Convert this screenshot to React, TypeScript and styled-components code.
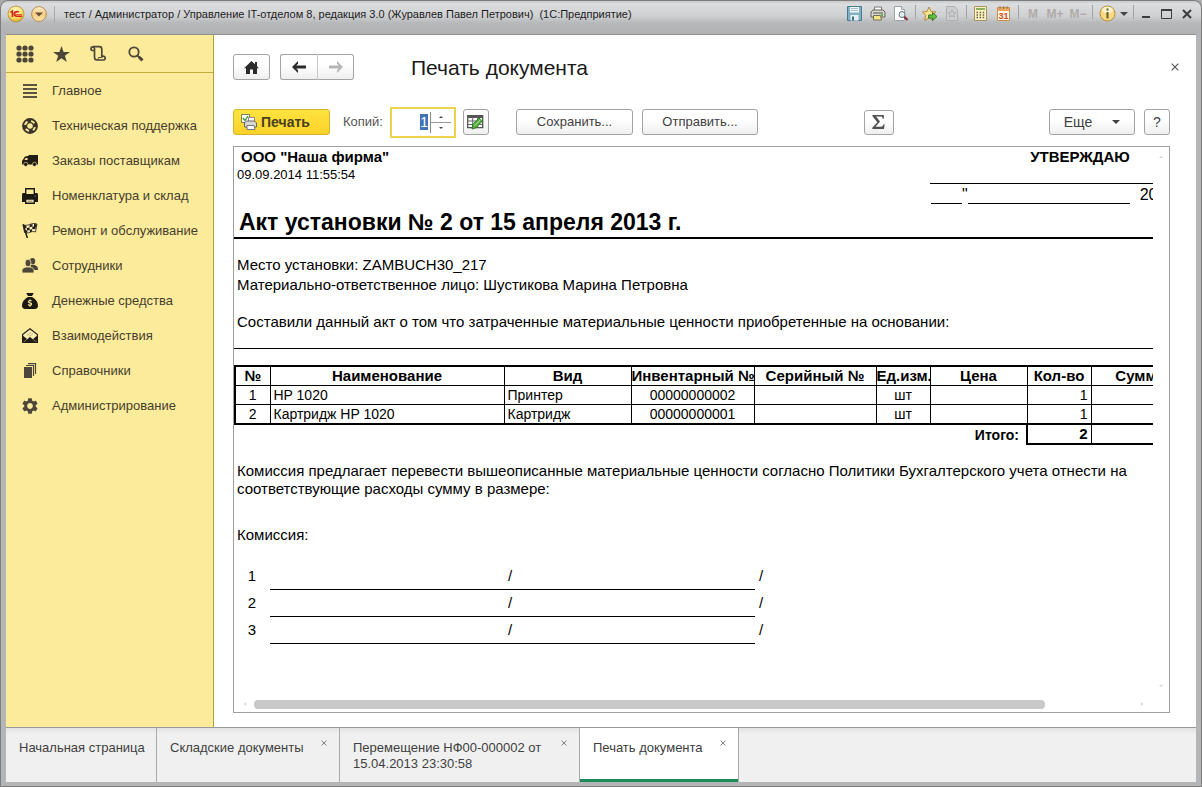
import React, { useEffect, useRef, useState } from "react";
import styled, { createGlobalStyle } from "styled-components";
import { FaSackDollar } from "react-icons/fa6";
import { MdSettings } from "react-icons/md";

const GlobalStyle = createGlobalStyle`
  *, *::before, *::after { box-sizing: border-box; }
  body {
    margin: 0;
    background: #ababab;
    color: #404040;
    font: 13px/16px "Liberation Sans", Arial, sans-serif;
  }
  button, input { font: inherit; color: inherit; }
  svg { display: block; flex: none; }
`;

/* ---------- window frame ---------- */

const Window = styled.div`
  display: flex;
  flex-direction: column;
  min-height: 100vh;
  padding: 0 5px 4px;
  background: #b4b5b6;
  border: 1px solid #7d7d7d;
  border-radius: 8px 8px 0 0;
`;

const TitleBar = styled.header`
  display: flex;
  align-items: center;
  height: 33px;
  margin: 0 -5px;
  padding: 0 3px 8px 6px;
  border-radius: 8px 8px 0 0;
  background: linear-gradient(#c9cacc 0, #dcdddf 3px, #cfd0d2 15px, #b7b8ba 22px, #b0b1b3 100%);
  color: #1c1c1c;
  font-size: 11px;
`;

const WindowTitle = styled.span`
  flex: 1;
  min-width: 0;
  margin-left: 1px;
  padding-left: 9px;
  border-left: 1px solid #a9a9ab;
  white-space: nowrap;
  overflow: hidden;
`;

const BarButton = styled.button<{ $w?: number }>`
  display: flex;
  align-items: center;
  justify-content: center;
  width: ${(p) => p.$w ?? 24}px;
  height: 18px;
  padding: 0;
  border: 0;
  background: none;
  color: #b0aba9;
  font-size: 12px;
  font-weight: bold;
`;

const BarSeparator = styled.span<{ $tight?: boolean }>`
  width: 1px;
  height: 14px;
  margin: ${(p) => (p.$tight ? "0 2px 4px" : "0 4px 4px 3px")};
  background: #a2a2a4;
`;

const Workspace = styled.div`
  display: flex;
  flex: 1;
  border-top: 1px solid #8f8f8f;
  background: #fff;
`;

/* ---------- sidebar ---------- */

const Sidebar = styled.aside`
  flex: none;
  width: 208px;
  background: #fdeb9c;
  border-right: 1px solid #b1a137;
`;

const QuickBar = styled.div`
  display: flex;
  height: 38px;
  padding: 0 6px;
  border-bottom: 1px solid #c2ac42;
`;

const QuickButton = styled.button`
  display: flex;
  align-items: center;
  justify-content: center;
  width: 37px;
  padding: 0 12px 0 0;
  border: 0;
  background: none;
  color: #4c4638;
`;

const Sections = styled.nav`
  display: flex;
  flex-direction: column;
`;

const SectionLink = styled.a`
  display: flex;
  align-items: center;
  gap: 14px;
  height: 35px;
  padding-left: 16px;
  color: #453e2c;
  font-size: 13px;
  text-decoration: none;
  white-space: nowrap;
`;

/* ---------- main area ---------- */

const Main = styled.main`
  display: flex;
  flex: 1;
  flex-direction: column;
  min-width: 0;
  padding: 19px 26px 14px 19px;
`;

const PageHead = styled.div`
  display: flex;
  align-items: center;
  height: 26px;
`;

const PageTitle = styled.h1`
  flex: 1;
  margin: 2px 0 0 57px;
  color: #1a1a1a;
  font-size: 21px;
  font-weight: normal;
  line-height: 24px;
`;

const CloseButton = styled.button`
  padding: 0;
  margin-right: -9px;
  border: 0;
  background: none;
`;

const Button = styled.button<{ $w: number; $h?: number; $primary?: boolean; $large?: boolean }>`
  display: flex;
  flex: none;
  align-items: center;
  justify-content: center;
  gap: 4px;
  width: ${(p) => p.$w}px;
  height: ${(p) => p.$h ?? 26}px;
  padding: 0 ${(p) => (p.$primary ? 12 : 0)}px 0 0;
  border: 1px solid ${(p) => (p.$primary ? "#d9b32c" : "#a3a3a3")};
  border-radius: 3px;
  background: ${(p) =>
    p.$primary ? "linear-gradient(#ffe33f, #fad22a)" : "linear-gradient(#fff 40%, #efefef)"};
  color: ${(p) => (p.$primary ? "#4a4020" : "#404040")};
  font-size: ${(p) => (p.$primary || p.$large ? 14 : 13)}px;
  font-weight: ${(p) => (p.$primary ? "bold" : "normal")};
`;

const HistoryButtons = styled.div`
  display: flex;
  margin-left: 10px;

  ${Button}:first-child { border-radius: 3px 0 0 3px; border-right-color: #c8c8c8; }
  ${Button}:last-child { border-radius: 0 3px 3px 0; border-left: 0; }
`;

const Toolbar = styled.div`
  display: flex;
  align-items: center;
  height: 32px;
  margin: 26px 0 8px;
`;

const CopiesLabel = styled.label`
  margin: 0 7px 0 13px;
  color: #555;
`;

const Spinner = styled.div`
  display: flex;
  width: 66px;
  height: 31px;
  padding: 3px;
  margin-right: 7px;
  border: 2px solid #edd44f;
  background: #fff;
`;

const CopiesInput = styled.input`
  flex: 1;
  min-width: 0;
  padding: 0 2px;
  border: 0;
  outline: 0;
  background: none;
  text-align: right;
  font-size: 14px;
  &::selection { background: #3f74b8; color: #fff; }
`;

const SpinnerKeys = styled.div`
  display: flex;
  flex-direction: column;
  width: 21px;
  border-left: 1px solid #8a8a8a;
`;

const SpinnerKey = styled.button`
  display: flex;
  flex: 1;
  align-items: center;
  justify-content: center;
  padding: 0;
  border: 0;
  background: none;
  & + & { border-top: 1px solid #9a9a9a; }
`;

const ToolGroup = styled.div<{ $before?: number }>`
  display: flex;
  align-items: center;
  gap: 9px;
  margin-left: ${(p) => (p.$before === undefined ? "auto" : `${p.$before}px`)};
`;

/* ---------- printed sheet ---------- */

const Viewer = styled.section`
  display: grid;
  flex: 1;
  grid-template: minmax(0, 1fr) 16px / minmax(0, 1fr) 16px;
  border: 1px solid #a0a0a0;
  background: #fff;
`;

const Sheet = styled.article`
  overflow: hidden;
  color: #000;
  font-size: 15px;
  line-height: 20px;
`;

const SheetHead = styled.div`
  display: flex;
  padding-left: 3px;
`;

const Issuer = styled.div`
  flex: none;
  width: 693px;
`;

const Company = styled.div`
  padding-left: 4px;
  font-weight: bold;
`;

const Stamp = styled.div`
  font-size: 13px;
  line-height: 16px;
`;

const Approval = styled.div`
  flex: none;
  width: 300px;
`;

const ApprovalTitle = styled.div`
  height: 37px;
  border-bottom: 1px solid #000;
  font-weight: bold;
  text-align: center;
`;

const ApprovalDate = styled.div`
  display: flex;
  height: 20px;
  padding-left: 1px;
  font-size: 16px;
  line-height: 22px;
`;

const Blank = styled.span<{ $w: number }>`
  width: ${(p) => p.$w}px;
  border-bottom: 1px solid #000;
`;

const Year = styled.span`
  margin-left: 10px;
`;

const SheetTitle = styled.h2`
  margin: 0;
  padding: 3px 0 0 5px;
  border-bottom: 2px solid #000;
  font-size: 23px;
  line-height: 30px;
  white-space: nowrap;
`;

const Text = styled.p<{ $top: number; $tight?: boolean }>`
  margin: ${(p) => p.$top}px 0 0;
  padding-left: 3px;
  line-height: ${(p) => (p.$tight ? 18 : 20)}px;
`;

const BasisLine = styled.div`
  height: 17px;
  border-bottom: 1px solid #000;
`;

const Items = styled.table`
  width: 954px;
  margin-top: 16px;
  border-collapse: collapse;
  table-layout: fixed;
  font-size: 14px;
  line-height: 18px;

  th, td { height: 19px; padding: 0 3px; white-space: nowrap; }
  thead th, tbody td { border: 1px solid #000; }
  thead th { padding: 0; border-top-width: 2px; font-size: 15px; }
  thead th:first-child, tbody td:first-child { border-left-width: 2px; }
  tbody tr:last-child td { border-bottom-width: 2px; }
  tfoot th { padding-right: 7px; text-align: right; }
`;

const Cell = styled.td<{ $align?: string }>`
  text-align: ${(p) => p.$align ?? "left"};
`;

const TotalCell = styled.td<{ $first?: boolean }>`
  border: 1px solid #000;
  border-bottom-width: 2px;
  border-left-width: ${(p) => (p.$first ? 2 : 1)}px;
  font-size: 15px;
  font-weight: bold;
  text-align: right;
`;

const Signatures = styled.ol`
  margin: 18px 0 0;
  padding: 0;
  list-style: none;
`;

const Signature = styled.li`
  display: flex;
  height: 27px;
  line-height: 26px;
`;

const SignatureNo = styled.span`
  width: 36px;
  text-align: center;
`;

const SignatureLine = styled.span`
  display: flex;
  width: 485px;
  margin-right: 4px;
  padding-left: 238px;
  border-bottom: 1px solid #000;
`;

const VerticalScroll = styled.div`
  display: flex;
  flex-direction: column;
  align-items: center;
  justify-content: space-between;
  padding: 8px 0;
`;

const HorizontalScroll = styled.div`
  display: flex;
  align-items: center;
  padding: 0 9px;
`;

const ScrollTrack = styled.div`
  flex: 1;
  margin: 0 7px;
`;

const ScrollThumb = styled.div`
  width: 90%;
  height: 9px;
  border-radius: 4px;
  background: #c9c9c9;
`;

/* ---------- open windows ---------- */

const Tabs = styled.div`
  display: flex;
  height: 55px;
  border-top: 1px solid #999;
  background: linear-gradient(#e2e2e2, #f0f0f0 6px);
`;

const Tab = styled.div<{ $w: number; $active?: boolean }>`
  display: flex;
  align-items: flex-start;
  justify-content: space-between;
  width: ${(p) => p.$w}px;
  padding: 12px 12px 0 13px;
  border-right: 1px solid #a9a9a9;
  ${(p) => p.$active && "background: #fff; box-shadow: inset 0 -3px #1f8a55;"}
`;

const TabLabel = styled.button<{ $wrap?: boolean }>`
  padding: 0;
  border: 0;
  background: none;
  line-height: 16px;
  text-align: left;
  white-space: ${(p) => (p.$wrap ? "normal" : "nowrap")};
`;

const TabClose = styled.button`
  flex: none;
  padding: 0;
  border: 0;
  background: none;
`;

/* ---------- drawings ---------- */

const Cross = ({ size, color = "#555" }: { size: number; color?: string }) => (
  <svg width={size} height={size} viewBox="0 0 8 8" stroke={color} strokeWidth="1.2">
    <path d="M.7.7l6.6 6.6M7.3.7L.7 7.3" />
  </svg>
);

const Triangle = ({ w, color, turn = 0 }: { w: number; color: string; turn?: number }) => (
  <svg width={w} height={w} viewBox="0 0 8 8">
    <path d="M0 2h8L4 6z" fill={color} transform={`rotate(${turn} 4 4)`} />
  </svg>
);

const Arrow = ({ color, flip }: { color: string; flip?: boolean }) => (
  <svg width="14" height="12" viewBox="0 0 14 12">
    <path
      d="M6 0L0 6l6 6V9.2L4.300 7.400H14V4.600H4.300L6 2.800z"
      fill={color}
      transform={flip ? "translate(14 0) scale(-1 1)" : undefined}
    />
  </svg>
);

const LogoIcon = () => (
  <svg width="18" height="18" viewBox="0 0 18 18">
    <defs>
      <radialGradient id="logo" cx=".45" cy=".3" r=".8">
        <stop offset="0" stopColor="#fffbd0" />
        <stop offset=".55" stopColor="#fbdf63" />
        <stop offset="1" stopColor="#c98a1c" />
      </radialGradient>
    </defs>
    <circle cx="9" cy="9" r="8" fill="url(#logo)" stroke="#b48a45" strokeWidth=".8" />
    <g fill="none" stroke="#d3261b" strokeWidth="1.6">
      <path d="M3.4 7.3L5.4 6v6" />
      <path d="M11.8 7.2A2.8 2.4 0 1 0 9.4 11.3H15" />
      <path d="M10.6 8.3A1.3 1 0 1 0 9.4 9.6H15" strokeWidth=".8" />
    </g>
  </svg>
);

const MenuOrbIcon = () => (
  <svg width="18" height="18" viewBox="0 0 18 18">
    <defs>
      <linearGradient id="orb" x2="0" y2="1">
        <stop offset="0" stopColor="#fff0cf" />
        <stop offset=".5" stopColor="#f6cb85" />
        <stop offset="1" stopColor="#ffe7a8" />
      </linearGradient>
    </defs>
    <circle cx="9" cy="9" r="7.4" fill="url(#orb)" stroke="#b58c55" />
    <path d="M5 7.500h8l-4 4z" fill="#6a5238" />
  </svg>
);

const DisketteIcon = () => (
  <svg width="15" height="15" viewBox="0 0 15 15">
    <path d="M.5.5h14v14H.5z" fill="#7fb0c3" stroke="#47798f" />
    <path d="M3 1h9v5.500H3z" fill="#f4f8fa" />
    <path d="M4 2.500h7M4 4.500h7" stroke="#a7bcc5" />
    <path d="M3.500 9h8v5.500h-8z" fill="#e8f0f3" />
    <path d="M5 10.500h2v4H5z" fill="#40707f" />
  </svg>
);

const PrinterColorIcon = () => (
  <svg width="16" height="15" viewBox="0 0 16 15">
    <path d="M4.500 5V1h7v4" fill="#fff" stroke="#777" />
    <path d="M1 6l2-2h10l2 2v5H1z" fill="#d9d6cd" stroke="#656258" />
    <path d="M3 7h10" stroke="#555" />
    <path d="M11 9h2" stroke="#45a23c" strokeWidth="1.500" />
    <path d="M3.500 9.500h7l1 4.500h-8z" fill="#f4e680" stroke="#77705a" />
  </svg>
);

const PreviewIcon = () => (
  <svg width="16" height="15" viewBox="0 0 16 15">
    <path d="M1.500.5h7l3 3v11h-10z" fill="#fff" stroke="#9aa3aa" />
    <path d="M8.500.5v3h3" fill="#dfe5e8" stroke="#9aa3aa" />
    <circle cx="9" cy="8.500" r="3" fill="#e3f2f7" stroke="#60747d" />
    <path d="M11.300 10.800l3.200 3.200" stroke="#8f2138" strokeWidth="2" />
  </svg>
);

const FavoriteAddIcon = () => (
  <svg width="16" height="16" viewBox="0 0 16 16">
    <path d="M7 1l2 4.500 5 .5-3.700 3.300 1 5L7 12l-4.300 2.300 1-5L.5 6 5 5.500z" fill="#fbe48e" stroke="#b78a3b" />
    <path d="M6.500 9h4V6.500L15 10.500l-4.500 4V12h-4z" fill="#62c044" stroke="#2e7c28" />
  </svg>
);

const FavoritesIcon = () => (
  <svg width="14" height="15" viewBox="0 0 14 15" fill="none" stroke="#b0b0b0">
    <path d="M1.500.5h8l3 3v11h-11z" fill="#cccdce" />
    <path d="M7 4l1.200 2.400 2.600.3-2 1.700.6 2.600L7 9.700 4.600 11l.6-2.600-2-1.700 2.600-.3z" />
  </svg>
);

const CalculatorIcon = () => (
  <svg width="13" height="15" viewBox="0 0 13 15">
    <path d="M.5.5h12v14H.5z" fill="#fbf1c5" stroke="#a99360" />
    <path d="M2 2h9v2H2z" fill="#8bb35c" />
    <path d="M2.500 6.500h8M2.500 9h8M2.500 11.500h8" stroke="#6c5f38" strokeWidth="1.500" strokeDasharray="1.500 1.600" />
  </svg>
);

const CalendarIcon = () => (
  <svg width="13" height="15" viewBox="0 0 13 15">
    <path d="M.5 1.500h12v13H.5z" fill="#fff8e6" stroke="#c59052" />
    <path d="M1 2h11v3H1z" fill="#efa65a" />
    <path d="M3 0v3M6.500 0v3M10 0v3" stroke="#9b7b58" />
    <text x="6.500" y="13" textAnchor="middle" fontSize="9" fontWeight="bold" fill="#d4451f">31</text>
  </svg>
);

const InfoIcon = () => (
  <svg width="17" height="17" viewBox="0 0 17 17">
    <circle cx="8.500" cy="8.500" r="7.500" fill="#fbd983" stroke="#b98a3c" />
    <ellipse cx="8.500" cy="5" rx="5.500" ry="3.200" fill="#fff3cf" />
    <path d="M8.500 3.500v2M8.500 7v6.500" stroke="#5b5f2c" strokeWidth="2" />
  </svg>
);

const GridDotsIcon = () => (
  <svg width="18" height="18" viewBox="0 0 18 18" fill="currentColor">
    {[3, 9, 15].map((y) => [3, 9, 15].map((x) => <circle key={`${x}${y}`} cx={x} cy={y} r="2.600" />))}
  </svg>
);

const StarIcon = () => (
  <svg width="17" height="16" viewBox="0 0 17 16" fill="currentColor">
    <path d="M8.500 0l2.100 5.900H17l-5.100 3.900L13.800 16l-5.300-3.700L3.200 16l1.900-6.200L0 5.900h6.400z" />
  </svg>
);

const HistoryIcon = () => (
  <svg width="17" height="17" viewBox="0 0 17 17" fill="none" stroke="currentColor" strokeWidth="1.700">
    <path d="M4.500 5.500H2.300A1.800 1.800 0 1 1 4.500 3.500V12c0 2.300 1 3 2.500 3h6.500a1.900 1.900 0 1 0-1.700-3" />
    <path d="M3 1.700h6.500c1.600 0 2.300.8 2.300 2.500v8.300" />
    <path d="M7 15c1.200 0 1.500-1 1.500-2.500h3" strokeWidth="1" />
  </svg>
);

const SearchIcon = () => (
  <svg width="16" height="16" viewBox="0 0 16 16" fill="none" stroke="currentColor">
    <circle cx="6" cy="6" r="4.700" strokeWidth="1.800" />
    <path d="M9.500 9.500l2 2" strokeWidth="1.800" />
    <path d="M11 11l3.500 3.300" strokeWidth="3" />
  </svg>
);

const LinesIcon = () => (
  <svg width="16" height="16" viewBox="0 0 16 16" stroke="#5b5240" strokeWidth="2">
    <path d="M1 2h14M1 6h14M1 10h14M1 14h14" />
  </svg>
);

const LifebuoyIcon = () => (
  <svg width="16" height="16" viewBox="0 0 16 16" fill="none">
    <circle cx="8" cy="8" r="7" stroke="#3a3428" strokeWidth="1.800" />
    <circle cx="8" cy="8" r="3.400" stroke="#3a3428" strokeWidth="1.200" />
    <path
      d="M4.300 1.800l2 3.200 2.500-.6L9.500.8zM14 4l-3 2.300.7 2.700 3.600.5zM12.300 14l-2.300-3-2.800.6-.5 3.700zM2 12.300L5 10l-.6-2.800L.8 6.500z"
      fill="#3a3428"
    />
  </svg>
);

const TruckIcon = () => (
  <svg width="16" height="12" viewBox="0 0 16 12" fill="#211d15">
    <path d="M6 1l1-1h9v9.500H0V6l3-4.500z" />
    <path d="M3.700 3H5.500v2H2.400z" fill="#fdeb9c" />
    <circle cx="3.700" cy="9.300" r="2.100" stroke="#fdeb9c" strokeWidth=".6" />
    <circle cx="12.500" cy="9.300" r="2.100" stroke="#fdeb9c" strokeWidth=".6" />
  </svg>
);

const PrinterIcon = () => (
  <svg width="16" height="16" viewBox="0 0 16 16">
    <path d="M0 6.500C0 5.700.6 5 1.500 5h13c.9 0 1.500.7 1.500 1.500V14H0z" fill="#1c1912" />
    <path d="M3.700 6V.8h8.600V6" fill="#fdeb9c" stroke="#1c1912" strokeWidth="1.400" />
    <path d="M3.700 11h8.600v4.300H3.700z" fill="#fdf3c4" stroke="#1c1912" strokeWidth="1.400" />
    <path d="M5.500 13.200h5M12.500 8h1.500" stroke="#8b8058" />
  </svg>
);

const FlagIcon = () => (
  <svg width="16" height="16" viewBox="0 0 16 16">
    <path d="M1 1.500c2 1.300 4 1 6.500 0S12.500 0 15 1l-1.500 8c-2-.8-3.500-.5-5.500.3s-3.500 1-5.500.2z" fill="#fdf3c4" stroke="#211d15" strokeWidth=".8" />
    <path
      d="M1.200 2l3 .8.500 2.400-2.900-.6zM7.500 1.800L10.500 1l-.1 2.500-2.800.8zM4.700 5.200l2.900-.9.100 2.600-2.500.5zM10.400 3.500l3.600.1-.6 2.600-3.200-.2zM2.200 7l3 .4.300 2.200-2.800-.4zM7.700 6.900l2.500-.9-.2 2.500-2.100.8zM12 1l2.800.3-.6 2.300-2.200-.1z"
      fill="#211d15"
    />
    <path d="M1.300 1.500L5.300 15" stroke="#211d15" strokeWidth="1.500" />
  </svg>
);

const PeopleIcon = () => (
  <svg width="16" height="15" viewBox="0 0 16 15" fill="#4d463a">
    <ellipse cx="10.500" cy="3.300" rx="2.700" ry="3.300" />
    <path d="M8.500 7h4.300c2 .8 3.200 1.800 3.200 3.800V12H9z" />
    <g stroke="#fdeb9c" strokeWidth=".8">
      <ellipse cx="6" cy="5" rx="3" ry="3.800" />
      <path d="M0 15v-2.500c0-2 1.500-2.600 4-3.500h4c2.500.9 4 1.500 4 3.500V15z" />
    </g>
  </svg>
);

const LetterIcon = () => (
  <svg width="16" height="15" viewBox="0 0 16 15">
    <path d="M.6 6.500L8 .8l7.400 5.700v8H.6z" fill="#fbeeb2" stroke="#211d15" strokeWidth="1.100" />
    <path d="M0 7l5 4-5 4zM16 7l-5 4 5 4zM.5 15L8 9l7.500 6z" fill="#211d15" />
    <path d="M5 7.500l4-3M7 8.500l4-3" stroke="#c9b97b" />
  </svg>
);

const BooksIcon = () => (
  <svg width="16" height="15" viewBox="0 0 16 15">
    <path d="M2 4h8v11H2z" fill="#4d463a" />
    <path d="M4 2.500h7.500V13M6 .7h7.500V11" fill="none" stroke="#4d463a" strokeWidth="1.200" />
  </svg>
);

const HomeIcon = () => (
  <svg width="15" height="13" viewBox="0 0 15 13" fill="#2b2b2b">
    <path d="M7.500 0L11 3.300V1h2v4.200L15 7.200h-2V13H9V8.500H6V13H2V7.200H0z" />
  </svg>
);

const PrintFormIcon = () => (
  <svg width="16" height="16" viewBox="0 0 16 16">
    <path d="M.5.5h8v8h-8z" fill="#fff" stroke="#77805a" />
    <path d="M2 4l2 2.500L7 2" fill="none" stroke="#3d8f34" strokeWidth="1.300" />
    <path d="M7.500 7V3.500h6V7" fill="#fff" stroke="#8b8b8b" />
    <path d="M3.500 9l2-2h8l2 2v4h-12z" fill="#d8d8d2" stroke="#666" />
    <path d="M6 11.500h7l1 4H6z" fill="#fff" stroke="#777" />
  </svg>
);

const EditTableIcon = () => (
  <svg width="17" height="16" viewBox="0 0 17 16">
    <path d="M.7 1.700h15v12H.7z" fill="#fff" stroke="#555" strokeWidth="1.300" />
    <path d="M1 3h14.500" stroke="#555" strokeWidth="2" />
    <path d="M1 7h14.500M1 10.500h14.500M5.700 3v11M10.700 3v11" stroke="#666" />
    <path d="M5 15l.8-4.500L12 4l3.300 3L9 13.800z" fill="#55b03d" stroke="#2f7d25" />
    <path d="M7.500 12l6-6.300" stroke="#b6e3a6" />
  </svg>
);

const SigmaIcon = () => (
  <svg width="13" height="14" viewBox="0 0 13 14" fill="#505050">
    <path d="M.5 0h11.300v3.700h-1C10.500 2.200 10 1.600 8.500 1.600H4L8 6.500l-4.500 5.200H9c1.600 0 2.200-.8 2.600-2.400h1L12 14H.3v-1.200l5-5.600L.5 1.300z" />
  </svg>
);

const SECTIONS: [React.ReactNode, string][] = [
  [<LinesIcon />, "Главное"],
  [<LifebuoyIcon />, "Техническая поддержка"],
  [<TruckIcon />, "Заказы поставщикам"],
  [<PrinterIcon />, "Номенклатура и склад"],
  [<FlagIcon />, "Ремонт и обслуживание"],
  [<PeopleIcon />, "Сотрудники"],
  [<FaSackDollar size={16} color="#1c1912" />, "Денежные средства"],
  [<LetterIcon />, "Взаимодействия"],
  [<BooksIcon />, "Справочники"],
  [<MdSettings size={16} viewBox="2 2 20 20" color="#4d463a" />, "Администрирование"],
];

const COLUMNS: [string, number][] = [
  ["№", 35],
  ["Наименование", 234],
  ["Вид", 127],
  ["Инвентарный №", 123],
  ["Серийный №", 122],
  ["Ед.изм.", 54],
  ["Цена", 97],
  ["Кол-во", 64],
  ["Сумма", 98],
];

const ROWS = [
  { no: 1, name: "HP 1020", kind: "Принтер", inventory: "00000000002" },
  { no: 2, name: "Картридж HP 1020", kind: "Картридж", inventory: "00000000001" },
];

const OPEN_WINDOWS = [
  { title: "Начальная страница", width: 151, closable: false },
  { title: "Складские документы", width: 183, closable: true },
  { title: "Перемещение НФ00-000002 от 15.04.2013 23:30:58", width: 240, closable: true, wrap: true },
  { title: "Печать документа", width: 159, closable: true, active: true },
];

export default function App() {
  const [copies, setCopies] = useState(1);
  const copiesRef = useRef<HTMLInputElement>(null);

  useEffect(() => {
    copiesRef.current?.focus();
    copiesRef.current?.select();
  }, []);

  return (
    <>
      <GlobalStyle />
      <Window>
        <TitleBar>
          <BarButton $w={18} aria-label="1С"><LogoIcon /></BarButton>
          <BarButton $w={28} aria-label="Меню"><MenuOrbIcon /></BarButton>
          <WindowTitle>
            тест / Администратор / Управление IT-отделом 8, редакция 3.0 (Журавлев Павел Петрович)&nbsp; (1С:Предприятие)
          </WindowTitle>
          <BarButton aria-label="Сохранить файл"><DisketteIcon /></BarButton>
          <BarButton aria-label="Печать файла"><PrinterColorIcon /></BarButton>
          <BarButton $w={22} aria-label="Предварительный просмотр"><PreviewIcon /></BarButton>
          <BarSeparator />
          <BarButton $w={20} aria-label="Добавить в избранное"><FavoriteAddIcon /></BarButton>
          <BarButton aria-label="Избранное"><FavoritesIcon /></BarButton>
          <BarSeparator $tight />
          <BarButton $w={22} aria-label="Калькулятор"><CalculatorIcon /></BarButton>
          <BarButton aria-label="Календарь"><CalendarIcon /></BarButton>
          <BarSeparator />
          <BarButton $w={20}>M</BarButton>
          <BarButton>M+</BarButton>
          <BarButton $w={22}>M−</BarButton>
          <BarSeparator />
          <BarButton $w={20} aria-label="Информация"><InfoIcon /></BarButton>
          <BarButton $w={14} aria-label="Ещё"><Triangle w={8} color="#444" /></BarButton>
          <BarSeparator $tight />
          <BarButton $w={20} aria-label="Свернуть">
            <svg width="8" height="10"><path d="M0 8h8" stroke="#3c3c3c" strokeWidth="2" /></svg>
          </BarButton>
          <BarButton $w={20} aria-label="Развернуть">
            <svg width="11" height="10"><path d="M.5 1h10v8.500H.5z" fill="none" stroke="#3c3c3c" /><path d="M0 1h11" stroke="#3c3c3c" strokeWidth="2" /></svg>
          </BarButton>
          <BarButton $w={22} aria-label="Закрыть программу">
            <svg width="10" height="10"><path d="M1 1l8 8M9 1L1 9" stroke="#3c3c3c" strokeWidth="2" /></svg>
          </BarButton>
        </TitleBar>

        <Workspace>
          <Sidebar>
            <QuickBar>
              <QuickButton aria-label="Разделы"><GridDotsIcon /></QuickButton>
              <QuickButton aria-label="Избранное"><StarIcon /></QuickButton>
              <QuickButton aria-label="История"><HistoryIcon /></QuickButton>
              <QuickButton aria-label="Поиск"><SearchIcon /></QuickButton>
            </QuickBar>
            <Sections>
              {SECTIONS.map(([icon, name]) => (
                <SectionLink key={name} href="#">{icon}{name}</SectionLink>
              ))}
            </Sections>
          </Sidebar>

          <Main>
            <PageHead>
              <Button $w={37} aria-label="Домой"><HomeIcon /></Button>
              <HistoryButtons>
                <Button $w={38} aria-label="Назад"><Arrow color="#2b2b2b" /></Button>
                <Button $w={36} aria-label="Вперед"><Arrow color="#b5b5b5" flip /></Button>
              </HistoryButtons>
              <PageTitle>Печать документа</PageTitle>
              <CloseButton aria-label="Закрыть"><Cross size={8} /></CloseButton>
            </PageHead>

            <Toolbar>
              <Button $w={97} $primary><PrintFormIcon />Печать</Button>
              <CopiesLabel htmlFor="copies">Копий:</CopiesLabel>
              <Spinner>
                <CopiesInput
                  id="copies"
                  ref={copiesRef}
                  value={copies}
                  onChange={(e) => setCopies(Number(e.target.value) || 0)}
                />
                <SpinnerKeys>
                  <SpinnerKey aria-label="Больше" onClick={() => setCopies(copies + 1)}>
                    <Triangle w={4} color="#444" turn={180} />
                  </SpinnerKey>
                  <SpinnerKey aria-label="Меньше" onClick={() => setCopies(Math.max(1, copies - 1))}>
                    <Triangle w={4} color="#444" />
                  </SpinnerKey>
                </SpinnerKeys>
              </Spinner>
              <Button $w={26} aria-label="Редактировать"><EditTableIcon /></Button>
              <ToolGroup $before={27}>
                <Button $w={117}>Сохранить...</Button>
                <Button $w={116}>Отправить...</Button>
              </ToolGroup>
              <ToolGroup $before={106}>
                <Button $w={30} $h={25} aria-label="Сумма"><SigmaIcon /></Button>
              </ToolGroup>
              <ToolGroup>
                <Button $w={86} $large>
                  <span>Еще</span>
                  <svg width="24" height="6"><path d="M16 1h8l-4 4z" fill="#404040" /></svg>
                </Button>
                <Button $w={26} $large>?</Button>
              </ToolGroup>
            </Toolbar>

            <Viewer>
              <Sheet>
                <SheetHead>
                  <Issuer>
                    <Company>ООО "Наша фирма"</Company>
                    <Stamp>09.09.2014 11:55:54</Stamp>
                  </Issuer>
                  <Approval>
                    <ApprovalTitle>УТВЕРЖДАЮ</ApprovalTitle>
                    <ApprovalDate>
                      <Blank $w={31} />"<Blank $w={162} />
                      <Year>2013 г.</Year>
                    </ApprovalDate>
                  </Approval>
                </SheetHead>
                <SheetTitle>Акт установки № 2 от 15 апреля 2013 г.</SheetTitle>
                <Text $top={16}>Место установки: ZAMBUCH30_217</Text>
                <Text $top={0}>Материально-ответственное лицо: Шустикова Марина Петровна</Text>
                <Text $top={17}>
                  Составили данный акт о том что затраченные материальные ценности приобретенные на основании:
                </Text>
                <BasisLine />
                <Items>
                  <colgroup>
                    {COLUMNS.map(([name, width]) => <col key={name} width={width} />)}
                  </colgroup>
                  <thead>
                    <tr>{COLUMNS.map(([name]) => <th key={name} scope="col">{name}</th>)}</tr>
                  </thead>
                  <tbody>
                    {ROWS.map((row) => (
                      <tr key={row.no}>
                        <Cell $align="center">{row.no}</Cell>
                        <Cell>{row.name}</Cell>
                        <Cell>{row.kind}</Cell>
                        <Cell $align="center">{row.inventory}</Cell>
                        <Cell />
                        <Cell $align="center">шт</Cell>
                        <Cell />
                        <Cell $align="right">1</Cell>
                        <Cell />
                      </tr>
                    ))}
                  </tbody>
                  <tfoot>
                    <tr>
                      <th colSpan={7} scope="row">Итого:</th>
                      <TotalCell $first>2</TotalCell>
                      <TotalCell />
                    </tr>
                  </tfoot>
                </Items>
                <Text $top={17} $tight>
                  Комиссия предлагает перевести вышеописанные материальные ценности согласно Политики Бухгалтерского учета отнести на
                  <br />
                  соответствующие расходы сумму в размере:
                </Text>
                <Text $top={27}>Комиссия:</Text>
                <Signatures>
                  {[1, 2, 3].map((n) => (
                    <Signature key={n}>
                      <SignatureNo>{n}</SignatureNo>
                      <SignatureLine>/</SignatureLine>/
                    </Signature>
                  ))}
                </Signatures>
              </Sheet>
              <VerticalScroll>
                <Triangle w={4} color="#d0d0d0" turn={180} />
                <Triangle w={4} color="#d0d0d0" />
              </VerticalScroll>
              <HorizontalScroll>
                <Triangle w={4} color="#d0d0d0" turn={90} />
                <ScrollTrack><ScrollThumb /></ScrollTrack>
                <Triangle w={4} color="#d0d0d0" turn={270} />
              </HorizontalScroll>
            </Viewer>
          </Main>
        </Workspace>

        <Tabs>
          {OPEN_WINDOWS.map((w) => (
            <Tab key={w.title} $w={w.width} $active={w.active}>
              <TabLabel $wrap={w.wrap}>{w.title}</TabLabel>
              {w.closable && (
                <TabClose aria-label={`Закрыть: ${w.title}`}><Cross size={6} color="#777" /></TabClose>
              )}
            </Tab>
          ))}
        </Tabs>
      </Window>
    </>
  );
}
